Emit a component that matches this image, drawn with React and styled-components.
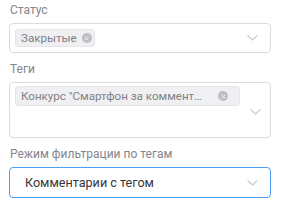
import React from 'react'
import styled, { createGlobalStyle } from 'styled-components'

const GlobalStyle = createGlobalStyle`
    body {
        margin: 0;
        background: #fff;
        font-family: Roboto, "Noto Sans", sans-serif;
    }
`

const Form = styled.div`
    display: flex;
    flex-direction: column;
    gap: 6px;
    width: 262px;
    padding-left: 9px;
`

const Field = styled.div`
    display: flex;
    flex-direction: column;
`

const Label = styled.div`
    height: 23px;
    line-height: 21px;
    font-size: 12px;
    color: #85858b;
    padding-left: 1px;
`

const SelectBox = styled.div`
    display: flex;
    align-items: ${p => p.$top ? 'flex-start' : 'center'};
    min-height: ${p => p.$height};
    box-sizing: border-box;
    border: 1px solid ${p => p.$active ? '#4a9df2' : '#dcdbe4'};
    border-radius: 4px;
    padding: ${p => p.$top ? '3px 0 0 5px' : '0 0 0 5px'};
`

const Values = styled.div`
    flex: 1;
    display: flex;
    flex-wrap: wrap;
    gap: 4px;
`

const Chip = styled.div`
    display: flex;
    align-items: center;
    height: ${p => p.$height};
    box-sizing: border-box;
    padding: 0 ${p => p.$padRight} 0 5px;
    background: #f0f0f2;
    border: 1px solid #e6e6ea;
    border-radius: 3px;
    font-size: 11.6px;
    color: #808086;
`

const ChipText = styled.span`
    max-width: ${p => p.$max || 'none'};
    white-space: nowrap;
    overflow: hidden;
    text-overflow: ellipsis;
`

const Remove = styled.span`
    display: inline-flex;
    align-items: center;
    justify-content: center;
    width: ${p => p.$size};
    height: ${p => p.$size};
    margin-left: ${p => p.$gap};
    border-radius: 50%;
    background: #bdbdc3;
`

const Value = styled.div`
    flex: 1;
    padding-left: 10px;
    font-size: 12.6px;
    color: #36363b;
`

const Arrow = styled.div`
    display: flex;
    align-items: center;
    justify-content: center;
    width: 36px;
    align-self: center;
`

const Chevron = () => (
    <svg width="11" height="6" viewBox="0 0 11 6" fill="none">
        <path d="M0.5 0.5 L5.5 5 L10.5 0.5" stroke="#c9c8d2" strokeWidth="1.1" />
    </svg>
)

const Cross = () => (
    <svg width="5" height="5" viewBox="0 0 5 5">
        <path d="M0.7 0.7 L4.3 4.3 M4.3 0.7 L0.7 4.3" stroke="#f4f4f6" strokeWidth="1" />
    </svg>
)

export default function App() {
    return (
        <>
            <GlobalStyle />
            <Form>
                <Field>
                    <Label>Статус</Label>
                    <SelectBox $height='30px'>
                        <Values>
                            <Chip $height='18px' $padRight='2px'>
                                <ChipText>Закрытые</ChipText>
                                <Remove $size='10px' $gap='5px'><Cross /></Remove>
                            </Chip>
                        </Values>
                        <Arrow><Chevron /></Arrow>
                    </SelectBox>
                </Field>
                <Field>
                    <Label>Теги</Label>
                    <SelectBox $height='56px' $top>
                        <Values>
                            <Chip $height='20px' $padRight='11px'>
                                <ChipText $max='186px'>Конкурс "Смартфон за комментарий"</ChipText>
                                <Remove $size='10px' $gap='11px'><Cross /></Remove>
                            </Chip>
                        </Values>
                        <Arrow><Chevron /></Arrow>
                    </SelectBox>
                </Field>
                <Field>
                    <Label>Режим фильтрации по тегам</Label>
                    <SelectBox $height='31px' $active>
                        <Value>Комментарии с тегом</Value>
                        <Arrow><Chevron /></Arrow>
                    </SelectBox>
                </Field>
            </Form>
        </>
    )
}
